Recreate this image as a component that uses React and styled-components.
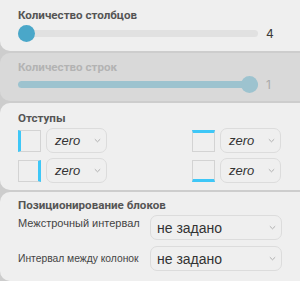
import React from "react";
import styled, { createGlobalStyle } from "styled-components";

const Global = createGlobalStyle`
  html, body { margin: 0; padding: 0; background: #cdcdcd; overflow: hidden; }
  body { font-family: Roboto, "Liberation Sans", sans-serif; }
  * { box-sizing: border-box; }
`;

const Stack = styled.div`
  display: flex;
  flex-direction: column;
  gap: 2px;
  width: 300px;
  height: 281px;
`;

const Panel = styled.section`
  background: ${(p) => (p.$disabled ? "#d9d9d9" : "#efefef")};
  border-radius: ${(p) => p.$radius};
  padding: ${(p) => p.$pad};
  display: flex;
  flex-direction: column;
  gap: ${(p) => p.$gap || "3px"};
  flex: ${(p) => (p.$grow ? 1 : "none")};
`;

const Title = styled.div`
  font-family: Roboto, "Liberation Sans", sans-serif;
  font-weight: 700;
  font-size: 11.6px;
  line-height: 14px;
  color: ${(p) => (p.$disabled ? "#b3b3b3" : "#555555")};
`;

const SliderRow = styled.div`
  display: flex;
  align-items: center;
  gap: 8px;
  height: 17px;
`;

const Track = styled.div`
  position: relative;
  flex: 1;
  height: 7px;
  border-radius: 4px;
  background: #e1e1e1;
`;

const Fill = styled.div`
  position: absolute;
  left: 0;
  top: 0;
  bottom: 0;
  border-radius: 4px;
  background: ${(p) => p.$color};
`;

const Thumb = styled.div`
  position: absolute;
  top: 50%;
  width: 17px;
  height: 17px;
  margin-top: -8.5px;
  border-radius: 50%;
  background: ${(p) => p.$color};
`;

const Value = styled.span`
  width: 14px;
  font-family: Inter, "Liberation Sans", sans-serif;
  font-size: 12px;
  color: ${(p) => (p.$disabled ? "#a9a9a9" : "#3a3a3a")};
`;

const PadGrid = styled.div`
  display: flex;
  flex-direction: column;
  gap: 5px;
`;

const PadRow = styled.div`
  display: flex;
  justify-content: space-between;
  align-items: center;
`;

const PadGroup = styled.div`
  display: flex;
  align-items: center;
  gap: 5px;
`;

const SideBox = styled.div`
  width: 23px;
  height: 22px;
  border: 1px solid #d3d3d3;
  ${(p) => `border-${p.$side}: 3px solid #3ec7f7;`}
`;

const Select = styled.div`
  display: flex;
  align-items: center;
  justify-content: space-between;
  width: ${(p) => p.$w}px;
  height: 25px;
  border: 1px solid #dcdcdc;
  border-radius: 7px;
  padding: 0 5px 0 ${(p) => p.$pl}px;
  font-family: "Liberation Sans", Arial, sans-serif;
  font-size: ${(p) => (p.$italic ? 13 : 14)}px;
  font-style: ${(p) => (p.$italic ? "italic" : "normal")};
  color: #333;
`;

const Chevron = () => (
  <svg width="7" height="5" viewBox="0 0 7 5" fill="none">
    <path d="M0.8 1.2 L3.5 3.8 L6.2 1.2" stroke="#b0b0b0" strokeWidth="1" />
  </svg>
);

const FieldRow = styled.div`
  display: grid;
  grid-template-columns: 132px 132px;
  align-items: ${(p) => p.$align};
`;

const FieldLabel = styled.span`
  font-family: "Liberation Sans", Arial, sans-serif;
  font-size: ${(p) => p.$size || 11}px;
  line-height: 14px;
  color: #444;
  white-space: nowrap;
  padding-top: ${(p) => p.$pt || 0}px;
`;

const Fields = styled.div`
  display: flex;
  flex-direction: column;
  gap: 6px;
`;

export default function App() {
  return (
    <>
      <Global />
      <Stack>
        <Panel $radius="0 0 0 10px" $pad="8px 20px 9px 18px">
          <Title>Количество столбцов</Title>
          <SliderRow>
            <Track>
              <Thumb $color="#4aa7c9" style={{ left: 0 }} />
            </Track>
            <Value>4</Value>
          </SliderRow>
        </Panel>
        <Panel $disabled $radius="10px 0 0 10px" $pad="7px 20px 8px 18px" $gap="2px">
          <Title $disabled>Количество строк</Title>
          <SliderRow>
            <Track>
              <Fill $color="#9dc3cf" style={{ width: "100%" }} />
              <Thumb $color="#9dc3cf" style={{ right: 0 }} />
            </Track>
            <Value $disabled>1</Value>
          </SliderRow>
        </Panel>
        <Panel $radius="10px 0 0 10px" $pad="8px 19px 7px 18px">
          <Title>Отступы</Title>
          <PadGrid>
            <PadRow>
              <PadGroup>
                <SideBox $side="left" />
                <Select $w={61} $pl={8} $italic>
                  zero
                  <Chevron />
                </Select>
              </PadGroup>
              <PadGroup>
                <SideBox $side="top" />
                <Select $w={61} $pl={8} $italic>
                  zero
                  <Chevron />
                </Select>
              </PadGroup>
            </PadRow>
            <PadRow>
              <PadGroup>
                <SideBox $side="right" />
                <Select $w={61} $pl={8} $italic>
                  zero
                  <Chevron />
                </Select>
              </PadGroup>
              <PadGroup>
                <SideBox $side="bottom" />
                <Select $w={61} $pl={8} $italic>
                  zero
                  <Chevron />
                </Select>
              </PadGroup>
            </PadRow>
          </PadGrid>
        </Panel>
        <Panel $grow $radius="10px 0 0 10px" $pad="6px 18px 8px 18px" $gap="3px">
          <Title>Позиционирование блоков</Title>
          <Fields>
            <FieldRow $align="start">
              <FieldLabel $pt={1}>Межстрочный интервал</FieldLabel>
              <Select $w={132} $pl={6}>
                не задано
                <Chevron />
              </Select>
            </FieldRow>
            <FieldRow $align="center">
              <FieldLabel $size={10.3}>Интервал между колонок</FieldLabel>
              <Select $w={132} $pl={6}>
                не задано
                <Chevron />
              </Select>
            </FieldRow>
          </Fields>
        </Panel>
      </Stack>
    </>
  );
}
